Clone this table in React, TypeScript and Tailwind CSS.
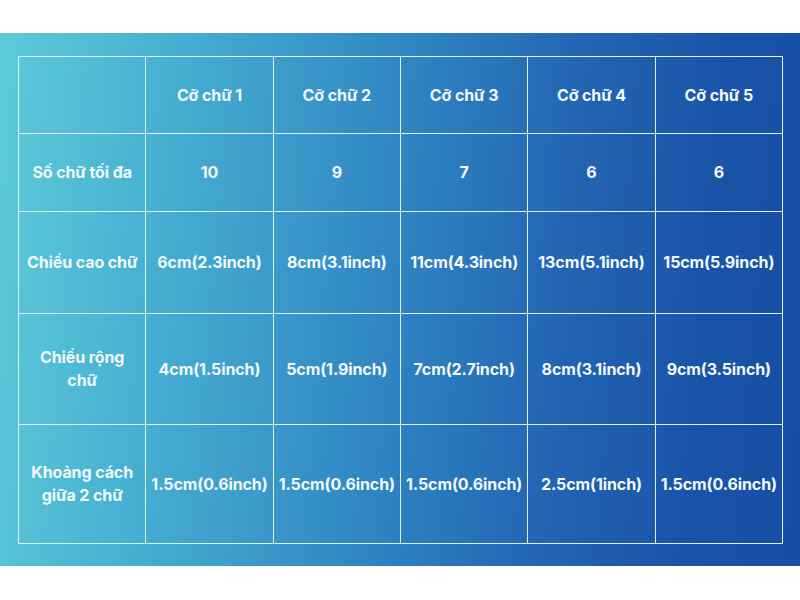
import React from 'react';

const headers = ['', 'Cỡ chữ 1', 'Cỡ chữ 2', 'Cỡ chữ 3', 'Cỡ chữ 4', 'Cỡ chữ 5'];

const rows: { label: string[]; values: string[]; height: string }[] = [
  { label: ['Số chữ tối đa'], values: ['10', '9', '7', '6', '6'], height: 'h-[78px]' },
  {
    label: ['Chiều cao chữ'],
    values: ['6cm(2.3inch)', '8cm(3.1inch)', '11cm(4.3inch)', '13cm(5.1inch)', '15cm(5.9inch)'],
    height: 'h-[102px]',
  },
  {
    label: ['Chiều rộng', 'chữ'],
    values: ['4cm(1.5inch)', '5cm(1.9inch)', '7cm(2.7inch)', '8cm(3.1inch)', '9cm(3.5inch)'],
    height: 'h-[111px]',
  },
  {
    label: ['Khoảng cách', 'giữa 2 chữ'],
    values: ['1.5cm(0.6inch)', '1.5cm(0.6inch)', '1.5cm(0.6inch)', '2.5cm(1inch)', '1.5cm(0.6inch)'],
    height: 'h-[119px]',
  },
];

function Cell({ children, height }: { children: React.ReactNode; height: string }) {
  return (
    <div
      className={`${height} flex flex-col items-center justify-center text-center border-r border-b border-[#dff0f9] leading-[23px]`}
    >
      {children}
    </div>
  );
}

export default function App() {
  return (
    <div
      className="w-[800px] h-[600px] bg-white flex flex-col"
      style={{ fontFamily: 'Inter, "Noto Sans", "Liberation Sans", sans-serif' }}
    >
      <div className="h-[33px]" />
      <div className="h-[533px] bg-[linear-gradient(95deg,#5ccbd8_0%,#48b3d2_18%,#3896c8_38%,#2d80c0_52%,#2264b3_70%,#1a54a8_86%,#164ea4_100%)] pt-[23px] pl-[18px] pr-[17px]">
        <div className="grid grid-cols-6 border-l border-t border-[#dff0f9] text-[16px] font-bold text-[#f2f9fc] tracking-[-0.1px]">
          {headers.map((h, i) => (
            <Cell key={i} height="h-[77px]">
              {h}
            </Cell>
          ))}
          {rows.map((row) => (
            <React.Fragment key={row.label.join(' ')}>
              <Cell height={row.height}>
                {row.label.map((l) => (
                  <span key={l}>{l}</span>
                ))}
              </Cell>
              {row.values.map((v, i) => (
                <Cell key={i} height={row.height}>
                  {v}
                </Cell>
              ))}
            </React.Fragment>
          ))}
        </div>
      </div>
    </div>
  );
}
